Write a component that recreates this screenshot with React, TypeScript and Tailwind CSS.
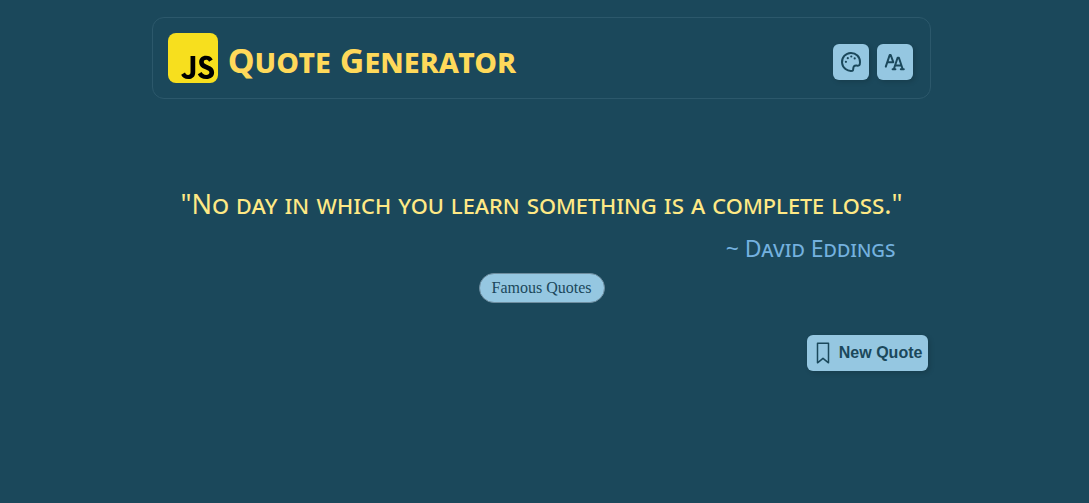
import React from "react";

const iconButton =
  "flex h-9 w-9 items-center justify-center rounded-md bg-[#95c7e1] text-[#1b485b] shadow-[2px_2px_5px_rgba(0,0,0,0.15)]";

function Logo() {
  return (
    <svg viewBox="0 0 630 630" className="h-[50px] w-[50px] rounded-lg" role="img" aria-label="JavaScript">
      <rect width="630" height="630" fill="#f7df1e" />
      <path d="m423.2 492.19c12.69 20.72 29.2 35.95 58.4 35.95 24.53 0 40.2-12.26 40.2-29.2 0-20.3-16.1-27.49-43.1-39.3l-14.8-6.35c-42.72-18.2-71.1-41-71.1-89.2 0-44.4 33.83-78.2 86.7-78.2 37.64 0 64.7 13.1 84.2 47.4l-46.1 29.6c-10.15-18.2-21.1-25.37-38.1-25.37-17.34 0-28.33 11-28.33 25.37 0 17.76 11 24.95 36.4 35.95l14.8 6.34c50.3 21.57 78.7 43.56 78.7 93 0 53.3-41.87 82.5-98.1 82.5-54.98 0-90.5-26.2-107.88-60.54zm-209.13 5.13c9.3 16.5 17.76 30.45 38.1 30.45 19.45 0 31.72-7.61 31.72-37.2v-201.3h59.2v202.1c0 61.3-35.94 89.2-88.4 89.2-47.4 0-74.85-24.53-88.81-54.075z" />
    </svg>
  );
}

function PaletteIcon() {
  return (
    <svg viewBox="0 0 24 24" className="h-6 w-6" fill="none" stroke="currentColor" strokeWidth="2" strokeLinejoin="round" aria-hidden="true">
      <path d="M13.4 20.8A9 9 0 1 1 21 12.2C21 15.4 20 15.8 17.6 15.6C15 15.4 14.4 16.4 14.3 18.4C14.2 19.8 14.2 20.5 13.4 20.8Z" />
      <g fill="currentColor" stroke="none">
        <circle cx="6.9" cy="11.8" r="1.1" />
        <circle cx="8.8" cy="8.2" r="1.1" />
        <circle cx="12.3" cy="6.5" r="1.1" />
        <circle cx="15.7" cy="8.4" r="1.1" />
      </g>
    </svg>
  );
}

function FontIcon() {
  return (
    <svg viewBox="0 0 24 24" className="h-6 w-6" fill="none" stroke="currentColor" strokeWidth="2" strokeLinejoin="round" strokeLinecap="round" aria-hidden="true">
      <path d="M2.8 16.6 6.7 5h1l2.6 7.2M4.6 12.2h5.2" />
      <path d="M10.8 19.2 14.6 7.8h1.3l3.8 11.4M12.2 15.4h6M9.6 19.3h2.8M17.8 19.3h3" />
    </svg>
  );
}

function BookmarkIcon() {
  return (
    <svg viewBox="0 0 22 24" className="h-6 w-[22px]" fill="none" stroke="currentColor" strokeWidth="1.5" strokeLinejoin="round" aria-hidden="true">
      <path d="M4.5 2.2h11v19.6L10 17.3l-5.5 4.5z" />
    </svg>
  );
}

export default function App() {
  return (
    <div className="min-h-screen bg-[#1b485b] pt-[17px] pr-1.5">
      <div className="mx-auto w-[72%]">
        <header className="flex items-center justify-between rounded-xl border border-[#2c586b] p-[15px] pr-[17px]">
          <div className="flex items-center gap-2.5">
            <Logo />
            <h1 className="pt-1 font-['Noto_Sans',sans-serif] text-[34px] leading-10 font-bold text-[#ffd95a] [font-variant:small-caps]">
              Quote Generator
            </h1>
          </div>
          <div className="flex gap-2 pt-2">
            <button type="button" aria-label="Change colors" className={iconButton}>
              <PaletteIcon />
            </button>
            <button type="button" aria-label="Change font" className={iconButton}>
              <FontIcon />
            </button>
          </div>
        </header>
        <main className="pt-[87px]">
          <blockquote className="text-center font-['Noto_Sans',sans-serif] text-[27px] leading-9 whitespace-nowrap text-[#ffe985] [font-variant:small-caps]">
            "No day in which you learn something is a complete loss."
          </blockquote>
          <p className="mt-2 pr-9 text-right font-['Noto_Sans',sans-serif] text-[23px] leading-9 text-[#74b1df] [font-variant:small-caps]">
            ~ David Eddings
          </p>
          <div className="mt-[7px] flex justify-center">
            <span className="rounded-full border border-[#6f8ea0] bg-[#95c7e1] px-3 font-['Liberation_Serif',serif] text-base leading-7 text-[#1b485b]">
              Famous Quotes
            </span>
          </div>
          <div className="mt-8 flex justify-end pr-[3px]">
            <button
              type="button"
              className="flex h-9 items-center gap-1 rounded-md bg-[#95c7e1] px-1.5 font-['Liberation_Sans',sans-serif] text-base font-bold text-[#1b485b] shadow-[2px_2px_5px_rgba(0,0,0,0.15)]"
            >
              <BookmarkIcon />
              New Quote
            </button>
          </div>
        </main>
      </div>
    </div>
  );
}
